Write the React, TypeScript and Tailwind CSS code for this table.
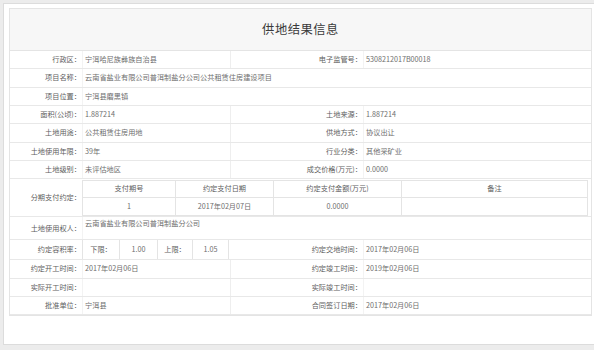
import React, { ReactElement } from "react";

const font = { fontFamily: '"Noto Sans CJK SC", "Liberation Sans", sans-serif' };

interface Cell {
  label: string;
  value?: string;
}

interface RowProps {
  left: Cell;
  right?: Cell;
  h: string;
}

function Row(props: RowProps): ReactElement {
  const { left, right, h } = props;
  return (
    <div className={`grid grid-cols-[72px_148px_133px_1fr] border-b border-[#e8e8e8] ${h}`}>
      <div className="flex items-center justify-end pr-[1px] text-[#606060]">{left.label}：</div>
      <div
        className={`flex items-center pl-[2px] border-l border-[#f3f3f3] ${right ? "" : "col-span-3"}`}
      >
        {left.value}
      </div>
      {right && (
        <>
          <div className="flex items-center justify-end pr-[1px] border-l border-[#eeeeee] text-[#606060]">
            {right.label}：
          </div>
          <div className="flex items-center pl-[2px] border-l border-[#f3f3f3]">{right.value}</div>
        </>
      )}
    </div>
  );
}

const topRows: RowProps[] = [
  { left: { label: "行政区", value: "宁洱哈尼族彝族自治县" }, right: { label: "电子监管号", value: "5308212017B00018" }, h: "h-[18px]" },
  { left: { label: "项目名称", value: "云南省盐业有限公司普洱制盐分公司公共租赁住房建设项目" }, h: "h-[19px]" },
  { left: { label: "项目位置", value: "宁洱县磨黑镇" }, h: "h-[18px]" },
  { left: { label: "面积(公顷)", value: "1.887214" }, right: { label: "土地来源", value: "1.887214" }, h: "h-[18px]" },
  { left: { label: "土地用途", value: "公共租赁住房用地" }, right: { label: "供地方式", value: "协议出让" }, h: "h-[19px]" },
  { left: { label: "土地使用年限", value: "39年" }, right: { label: "行业分类", value: "其他采矿业" }, h: "h-[18px]" },
  { left: { label: "土地级别", value: "未评估地区" }, right: { label: "成交价格(万元)", value: "0.0000" }, h: "h-[18px]" },
];

const bottomRows: RowProps[] = [
  { left: { label: "约定开工时间", value: "2017年02月06日" }, right: { label: "约定竣工时间", value: "2019年02月06日" }, h: "h-[19px]" },
  { left: { label: "实际开工时间", value: "" }, right: { label: "实际竣工时间", value: "" }, h: "h-[18px]" },
  { left: { label: "批准单位", value: "宁洱县" }, right: { label: "合同签订日期", value: "2017年02月06日" }, h: "h-[18px]" },
];

function PaymentTable(): ReactElement {
  const cols = "grid grid-cols-[93px_98px_128px_1fr]";
  const cell = "flex items-center justify-center border-r border-[#e4e4e4]";
  return (
    <div className="border-l border-[#e4e4e4] mr-[3px] mt-[1px]">
      <div className={`${cols} h-[18px] border-b border-t border-[#e4e4e4] text-[#606060]`}>
        <div className={cell}>支付期号</div>
        <div className={cell}>约定支付日期</div>
        <div className={cell}>约定支付金额(万元)</div>
        <div className={cell}>备注</div>
      </div>
      <div className={`${cols} h-[18px] border-b border-[#e4e4e4]`}>
        <div className={cell}>1</div>
        <div className={cell}>2017年02月07日</div>
        <div className={cell}>0.0000</div>
        <div className={cell}></div>
      </div>
    </div>
  );
}

export default function App(): ReactElement {
  return (
    <div className="w-[594px] h-[350px] bg-[#ececec] pt-[3px] pl-[3px] overflow-hidden" style={font}>
      <div className="bg-white border-l border-t border-b border-[#dcdcdc] pl-[5px] pr-[2px] pt-[4px] pb-[28px]">
        <div className="border border-[#e4e4e4] text-[7.2px] leading-none text-[#6e6e6e]">
          <div className="h-[42px] bg-[#f7f7f7] border-b border-[#e4e4e4] flex items-center justify-center">
            <span className="text-[12.3px] text-[#3a3a3a] tracking-[0.5px]">供地结果信息</span>
          </div>
          {topRows.map((r) => (
            <Row key={r.left.label} {...r} />
          ))}
          <div className="grid grid-cols-[72px_1fr] h-[38px] border-b border-[#e8e8e8]">
            <div className="flex items-center justify-end pr-[1px] text-[#606060]">分期支付约定：</div>
            <PaymentTable />
          </div>
          <div className="grid grid-cols-[72px_1fr] h-[23px] border-b border-[#e8e8e8]">
            <div className="flex items-end pb-[7px] justify-end pr-[1px] text-[#606060]">土地使用权人：</div>
            <div className="pl-[2px] pt-[3px] border-l border-[#f3f3f3]">云南省盐业有限公司普洱制盐分公司</div>
          </div>
          <div className="grid grid-cols-[72px_148px_133px_1fr] h-[20px] border-b border-[#e8e8e8]">
            <div className="flex items-center justify-end pr-[1px] text-[#606060]">约定容积率：</div>
            <div className="grid grid-cols-[37px_38px_35px_36px] border-l border-[#e4e4e4]">
              <div className="flex items-center justify-center border-r border-[#e4e4e4] text-[#606060]">下限：</div>
              <div className="flex items-center justify-center border-r border-[#e4e4e4]">1.00</div>
              <div className="flex items-center justify-center border-r border-[#e4e4e4] text-[#606060]">上限：</div>
              <div className="flex items-center justify-center border-r border-[#e4e4e4]">1.05</div>
            </div>
            <div className="flex items-center justify-end pr-[1px] text-[#606060]">约定交地时间：</div>
            <div className="flex items-center pl-[2px] border-l border-[#f3f3f3]">2017年02月06日</div>
          </div>
          {bottomRows.map((r) => (
            <Row key={r.left.label} {...r} />
          ))}
        </div>
      </div>
    </div>
  );
}
